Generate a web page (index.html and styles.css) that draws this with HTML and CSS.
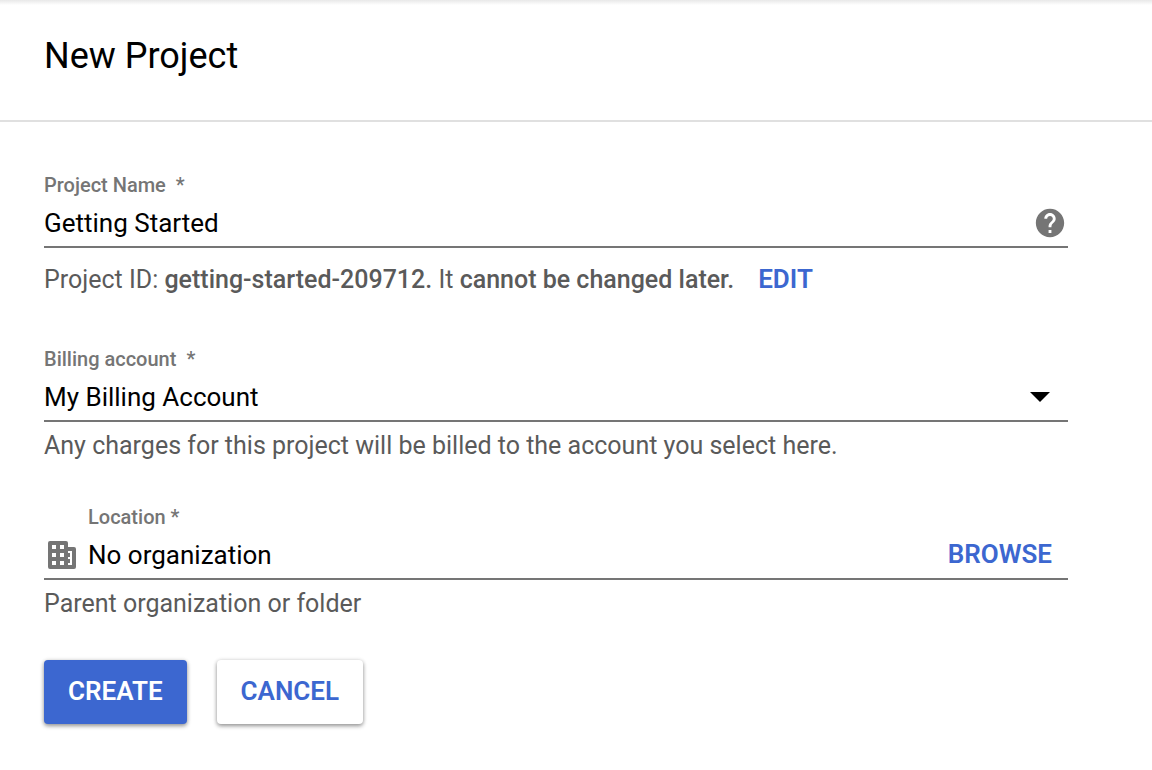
FILE: index.html
```html
<!DOCTYPE html>
<html lang="en">
<head>
  <meta charset="utf-8">
  <meta name="viewport" content="width=device-width, initial-scale=1">
  <title>New Project</title>
  <link rel="stylesheet" href="styles.css">
</head>
<body>
  <header class="page-header">
    <h1 class="page-title">New Project</h1>
  </header>
  <main>
    <form class="project-form">
      <div class="field">
        <label class="label label-wide" for="project-name">Project Name <span>*</span></label>
        <div class="control">
          <input class="value" id="project-name" type="text" value="Getting Started" required>
          <button class="help" type="button" aria-label="Help">
            <svg class="icon" viewBox="0 0 24 24" aria-hidden="true"><path d="M12 2C6.48 2 2 6.48 2 12s4.48 10 10 10 10-4.48 10-10S17.52 2 12 2zm1 17h-2v-2h2v2zm2.07-7.75l-.9.92C13.45 12.9 13 13.5 13 15h-2v-.5c0-1.1.45-2.1 1.17-2.83l1.24-1.26c.37-.36.59-.86.59-1.41 0-1.1-.9-2-2-2s-2 .9-2 2H8c0-2.21 1.79-4 4-4s4 1.79 4 4c0 .88-.36 1.68-.93 2.25z"/></svg>
          </button>
        </div>
        <div class="hint hint-id">
          <p class="hint-text">Project ID: <strong>getting-started-209712.</strong> It <strong>cannot be changed later.</strong></p>
          <button class="link-button" type="button">EDIT</button>
        </div>
      </div>

      <div class="field field-billing">
        <label class="label label-wide" for="billing">Billing account <span>*</span></label>
        <div class="control">
          <select class="value" id="billing" required>
            <option>My Billing Account</option>
          </select>
          <svg class="arrow" viewBox="0 0 20 10" aria-hidden="true"><path d="M0 0h20L10 10z"/></svg>
        </div>
        <p class="hint">Any charges for this project will be billed to the account you select here.</p>
      </div>

      <div class="field field-location">
        <label class="label label-indented" for="location">Location *</label>
        <div class="control">
          <svg class="icon icon-building" viewBox="0 0 28 28" aria-hidden="true"><path fill-rule="evenodd" d="M2 0H18Q20 0 20 2V6H26Q28 6 28 8V26Q28 28 26 28H2Q0 28 0 26V2Q0 0 2 0zM4 4V8H8V4zM12 4V8H16V4zM4 12V16H8V12zM12 12V16H16V12zM4 20V24H8V20zM12 20V24H16V20zM20 10V12H22V16H20V18H22V22H20V24H24V10z"/></svg>
          <input class="value" id="location" type="text" value="No organization" readonly>
          <button class="link-button browse" type="button">BROWSE</button>
        </div>
        <p class="hint">Parent organization or folder</p>
      </div>

      <div class="actions">
        <button class="button button-primary" type="submit">CREATE</button>
        <button class="button" type="button">CANCEL</button>
      </div>
    </form>
  </main>
</body>
</html>
```

FILE: styles.css
```css
* {
  box-sizing: border-box;
}

body {
  margin: 0;
  background: #fff;
  color: #000;
  font-family: Roboto, "Liberation Sans", sans-serif;
  font-size: 26px;
}

p,
h1 {
  margin: 0;
}

button,
input,
select {
  margin: 0;
  padding: 0;
  border: 0;
  background: none;
  color: inherit;
  font: inherit;
}

button {
  cursor: pointer;
}

.page-header {
  padding: 34px 44px 42px;
  border-bottom: 2px solid #e0e0e0;
  background: linear-gradient(#e8e8e8, #fff 5px);
}

.page-title {
  font-size: 36px;
  font-weight: 400;
  line-height: 44px;
}

.project-form {
  padding: 52px 84px 46px 44px;
}

.field-billing {
  margin-top: 54px;
}

.field-location {
  margin-top: 46px;
}

.label {
  display: flex;
  gap: 4px;
  color: #757575;
  font-size: 20px;
  font-weight: 500;
  line-height: 22px;
}

.label-wide {
  gap: 10px;
}

.label-indented {
  padding-left: 44px;
}

.control {
  display: flex;
  align-items: center;
  height: 52px;
  padding-top: 4px;
  border-bottom: 2px solid #757575;
}

.value {
  flex: 1;
  min-width: 0;
  height: 46px;
  appearance: none;
  outline: 0;
}

.icon {
  display: block;
  fill: #757575;
}

.help {
  width: 34px;
  height: 34px;
  margin-right: 1px;
}

.icon-building {
  width: 28px;
  height: 28px;
  margin: 0 12px 0 4px;
}

.arrow {
  width: 20px;
  height: 10px;
  margin-right: 18px;
}

.hint {
  margin-top: 10px;
  color: #5a5a5a;
  font-size: 25px;
  line-height: 28px;
}

.hint-id {
  display: flex;
  gap: 24px;
  margin-top: 18px;
}

.hint strong {
  font-weight: 500;
}

.link-button {
  padding-bottom: 2px;
  color: #3c67d0;
  font-size: 26px;
  font-weight: 600;
  line-height: 26px;
}

.browse {
  margin-right: 16px;
}

.actions {
  display: flex;
  gap: 30px;
  margin-top: 42px;
}

.button {
  height: 64px;
  padding: 0 24px 2px;
  border-radius: 4px;
  background: #fff;
  box-shadow: 0 2px 4px rgba(0, 0, 0, 0.4), 0 0 4px rgba(0, 0, 0, 0.1);
  color: #3c67d0;
  font-weight: 600;
}

.button-primary {
  background: #3c67d0;
  color: #fff;
}
```
